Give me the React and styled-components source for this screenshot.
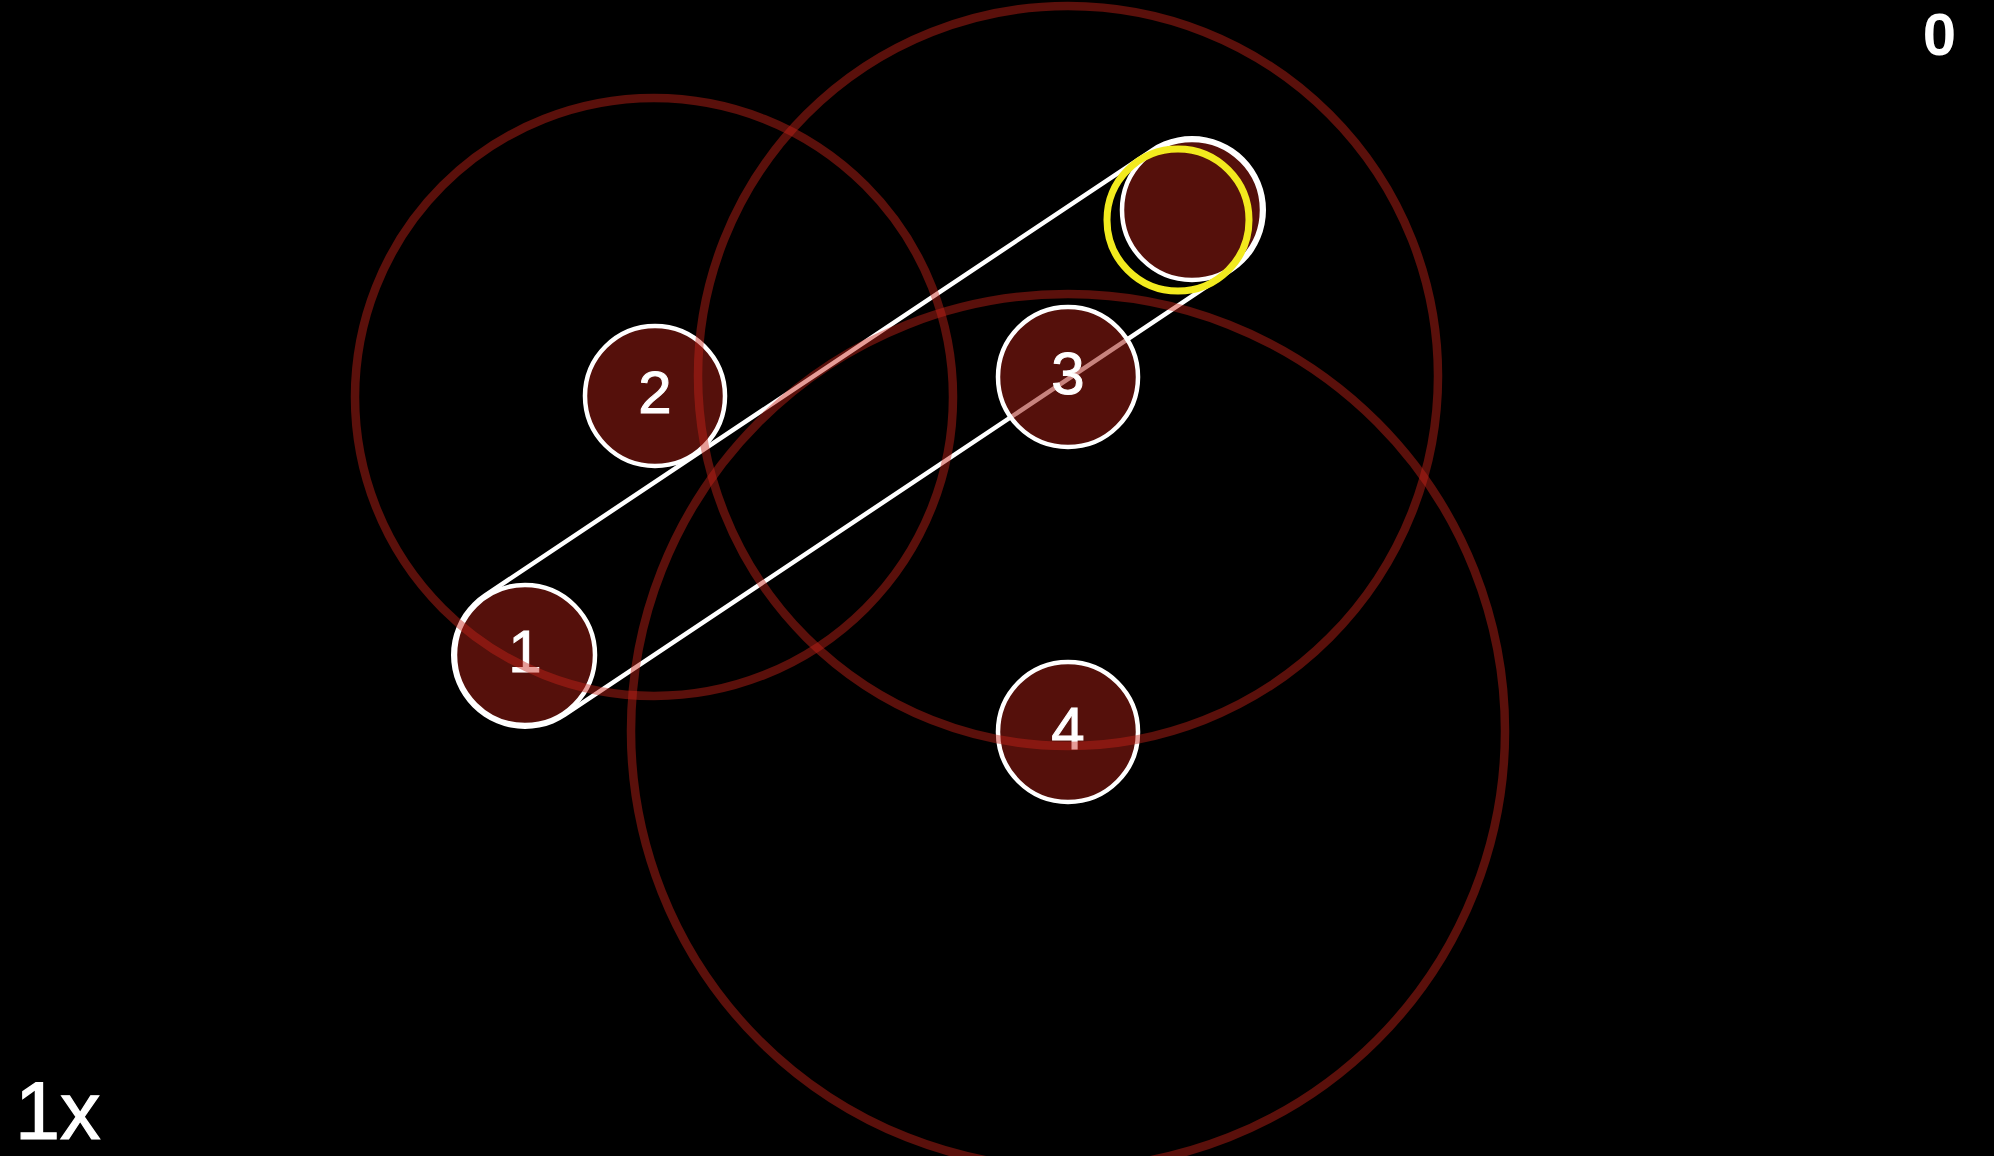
import React from "react";
import styled, { createGlobalStyle } from "styled-components";

const GlobalStyle = createGlobalStyle`
  html, body {
    margin: 0;
    padding: 0;
    background: #000;
    overflow: hidden;
  }
  #root {
    width: 100vw;
    height: 100vh;
  }
`;

const Stage = styled.main`
  position: relative;
  width: 1994px;
  height: 1156px;
  background: #000;
  overflow: hidden;
  font-family: "Liberation Sans", Arial, sans-serif;
  color: #fff;
`;

const Playfield = styled.svg`
  display: block;
  width: 1994px;
  height: 1156px;
`;

const SliderBorder = styled.line`
  stroke: #fff;
  stroke-width: 148;
  stroke-linecap: round;
`;

const SliderTrack = styled.line`
  stroke: #000;
  stroke-width: 139;
  stroke-linecap: round;
`;

const CircleBody = styled.circle`
  fill: ${(p) => (p.$solid ? "#55100b" : "rgba(155, 29, 20, 0.55)")};
  stroke: #fff;
  stroke-width: 4.5;
`;

const ComboNumber = styled.text`
  fill: #fff;
  stroke: #fff;
  stroke-width: 1;
  font-family: "Liberation Sans", Arial, sans-serif;
  font-size: 60px;
  text-anchor: middle;
`;

const ApproachRing = styled.circle`
  fill: none;
  stroke: rgb(200, 36, 25);
  stroke-opacity: 0.45;
  stroke-width: 8.5;
`;

const FollowRing = styled.circle`
  fill: none;
  stroke: #f2ea1e;
  stroke-width: 7;
`;

const Score = styled.div`
  position: absolute;
  top: 5px;
  right: 38px;
  font-size: 60px;
  line-height: 60px;
  font-weight: 700;
`;

const Speed = styled.div`
  position: absolute;
  left: 15px;
  bottom: 4px;
  font-size: 81px;
  line-height: 81px;
  font-weight: 400;
  -webkit-text-stroke: 1.2px #fff;
`;

const R = 70;

const slider = { from: { x: 525, y: 655 }, to: { x: 1192, y: 210 } };

const circles = [
  { n: 1, x: 525, y: 655, solid: true },
  { n: 2, x: 655, y: 396 },
  { n: 3, x: 1068, y: 377 },
  { n: 4, x: 1068, y: 732 },
];

const rings = [
  { x: 654, y: 397, r: 299 },
  { x: 1068, y: 376, r: 370 },
  { x: 1068, y: 731, r: 437 },
];

function HitCircle({ n, x, y, solid }) {
  return (
    <g>
      <CircleBody cx={x} cy={y} r={R} $solid={solid} />
      {n != null && (
        <ComboNumber x={x} y={y + 17}>
          {n}
        </ComboNumber>
      )}
    </g>
  );
}

export default function App() {
  return (
    <>
      <GlobalStyle />
      <Stage>
        <Playfield viewBox="0 0 1994 1156">
          <SliderBorder x1={slider.from.x} y1={slider.from.y} x2={slider.to.x} y2={slider.to.y} />
          <SliderTrack x1={slider.from.x} y1={slider.from.y} x2={slider.to.x} y2={slider.to.y} />
          {circles.map((c) => (
            <HitCircle key={c.n} {...c} />
          ))}
          <HitCircle x={slider.to.x} y={slider.to.y} solid />
          {rings.map((r, i) => (
            <ApproachRing key={i} cx={r.x} cy={r.y} r={r.r} />
          ))}
          <FollowRing cx={1178} cy={220} r={71} />
        </Playfield>
        <Score>0</Score>
        <Speed>1x</Speed>
      </Stage>
    </>
  );
}
